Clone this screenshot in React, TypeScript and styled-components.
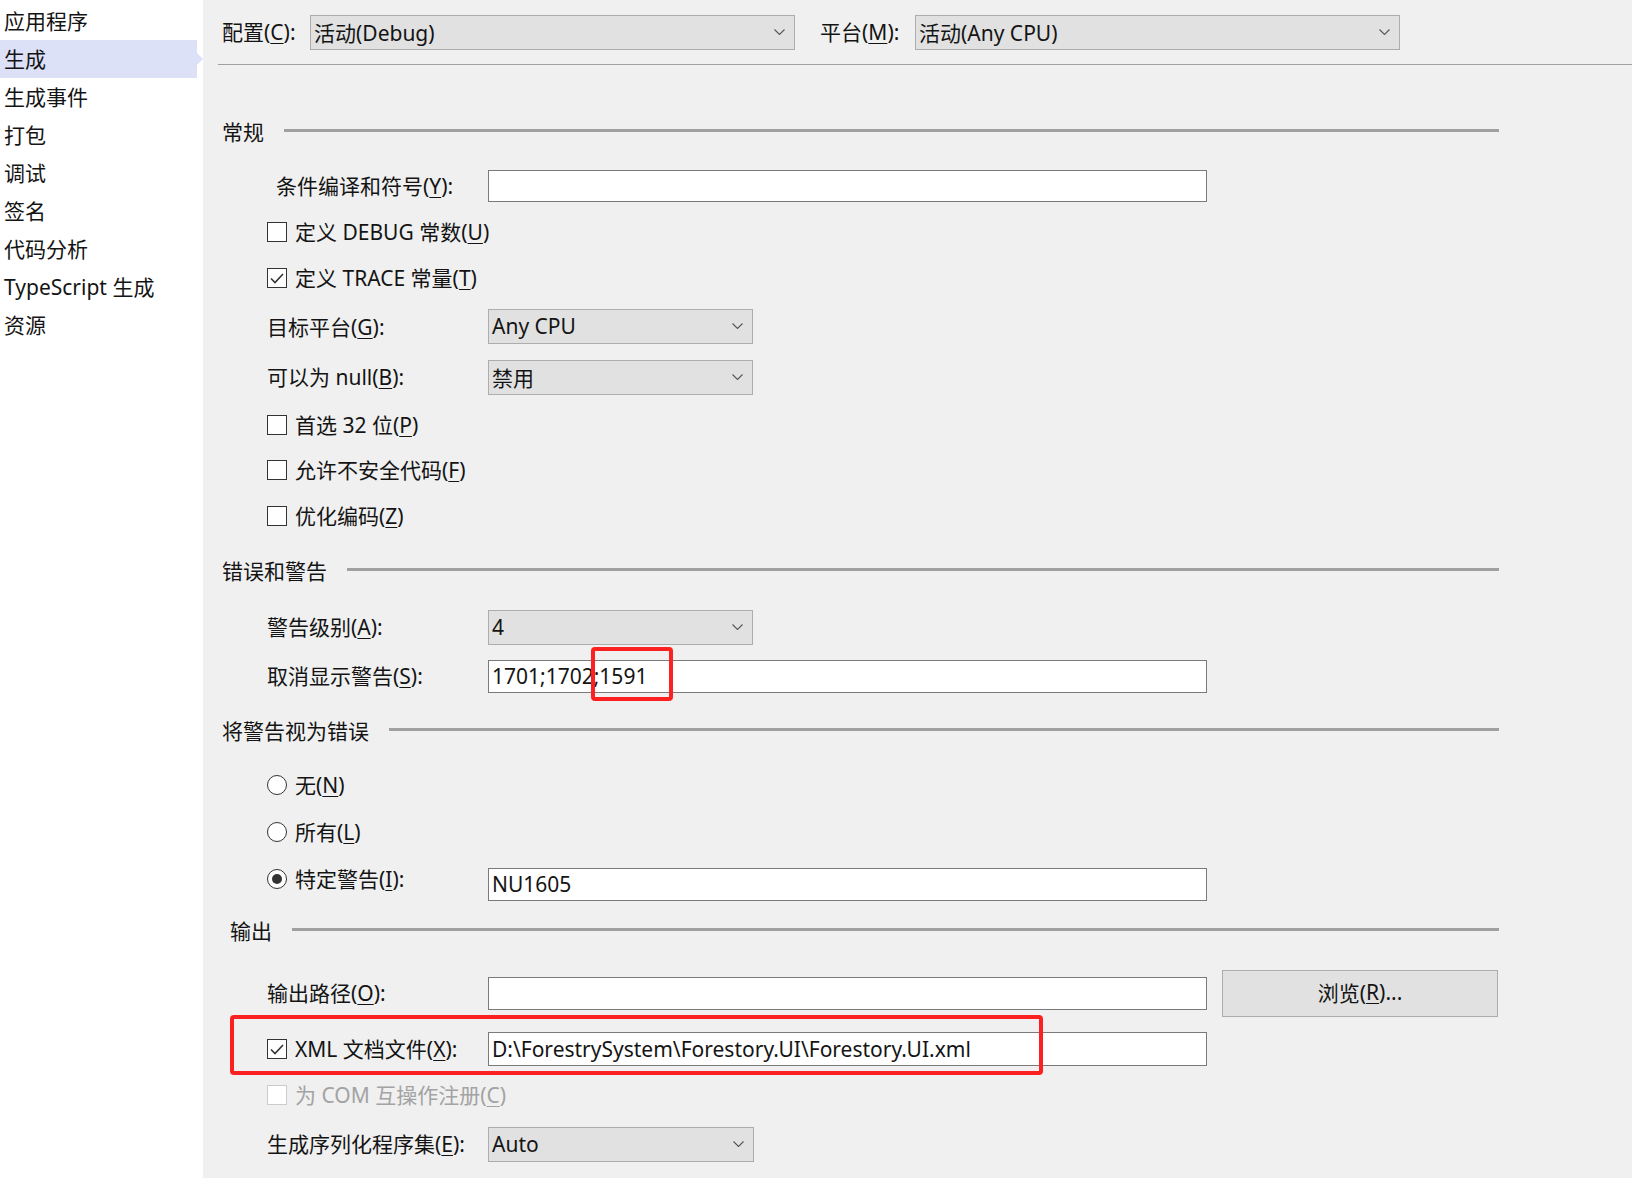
import React from "react";
import styled, { createGlobalStyle } from "styled-components";

const GlobalStyle = createGlobalStyle`
  html, body {
    margin: 0;
    padding: 0;
  }
  body {
    font-family: "Noto Sans", "Noto Sans CJK SC", sans-serif;
    font-size: 21px;
    color: #141414;
    background: #f0f0f0;
  }
  * {
    box-sizing: border-box;
  }
`;

const Page = styled.div`
  display: flex;
  width: 1632px;
  height: 1178px;
  overflow: hidden;
`;

const Sidebar = styled.nav`
  width: 203px;
  flex-shrink: 0;
  background: #ffffff;
  padding-top: 2px;
`;

const NavItem = styled.div<{ $active?: boolean }>`
  position: relative;
  width: 197px;
  height: 38px;
  padding: 0 0 3px 4px;
  display: flex;
  align-items: center;
  white-space: nowrap;
  background: ${(p) => (p.$active ? "#dce1f8" : "transparent")};

  ${(p) =>
    p.$active &&
    `
    &::after {
      content: "";
      position: absolute;
      right: -6px;
      top: 13px;
      border-left: 6px solid #dce1f8;
      border-top: 6px solid transparent;
      border-bottom: 6px solid transparent;
    }
  `}
`;

const Main = styled.main`
  flex: 1;
  background: #f0f0f0;
`;

const TopBar = styled.div`
  height: 65px;
  margin-left: 15px;
  padding-left: 4px;
  border-bottom: 1px solid #a0a0a0;
  display: flex;
  align-items: center;
`;

const TopLabel = styled.span<{ $w: number }>`
  width: ${(p) => p.$w}px;
  flex-shrink: 0;
  white-space: nowrap;
  padding-bottom: 2px;
`;

const Spacer = styled.div<{ $w: number }>`
  width: ${(p) => p.$w}px;
  flex-shrink: 0;
`;

const Select = styled.div<{ $w: number }>`
  width: ${(p) => p.$w}px;
  height: 35px;
  flex-shrink: 0;
  background: #e1e1e1;
  border: 1px solid #adadad;
  display: flex;
  align-items: center;
  justify-content: space-between;
  padding: 0 9px 1px 3px;
  white-space: nowrap;
`;

const Chevron = () => (
  <svg width="11" height="6" viewBox="0 0 11 6">
    <polyline points="0.5,0.5 5.5,5.5 10.5,0.5" fill="none" stroke="#555" strokeWidth="1.1" />
  </svg>
);

const Content = styled.div`
  width: 1296px;
  padding: 36px 0 0 19px;
`;

const SectionHeader = styled.div<{ $h: number; $indent?: number }>`
  height: ${(p) => p.$h}px;
  display: flex;
  align-items: center;
  padding-left: ${(p) => p.$indent ?? 0}px;
`;

const SectionTitle = styled.span`
  white-space: nowrap;
  padding-bottom: 2px;
`;

const Rule = styled.div`
  flex: 1;
  height: 3px;
  margin: -4px 0 0 20px;
  background: #a0a0a0;
`;

const Row = styled.div<{ $h: number }>`
  position: relative;
  height: ${(p) => p.$h}px;
  padding-left: 45px;
  display: flex;
  align-items: center;
`;

const Label = styled.span<{ $indent?: number; $w?: number }>`
  width: ${(p) => p.$w ?? 221}px;
  flex-shrink: 0;
  padding-left: ${(p) => p.$indent ?? 0}px;
  padding-bottom: 2px;
  white-space: nowrap;
`;

const TextBox = styled.div<{ $h?: number; $offset?: number }>`
  position: relative;
  width: 719px;
  height: ${(p) => p.$h ?? 33}px;
  margin-top: ${(p) => p.$offset ?? 0}px;
  flex-shrink: 0;
  background: #ffffff;
  border: 1px solid #7a7a7a;
  padding: 0 3px 1px;
  display: flex;
  align-items: center;
  white-space: nowrap;
`;

const Box = styled.span<{ $disabled?: boolean }>`
  width: 20px;
  height: 20px;
  flex-shrink: 0;
  margin-right: 8px;
  background: #ffffff;
  border: 1px solid ${(p) => (p.$disabled ? "#cccccc" : "#333333")};
  display: flex;
  align-items: center;
  justify-content: center;
`;

const Radio = styled.span<{ $checked?: boolean }>`
  width: 20px;
  height: 20px;
  flex-shrink: 0;
  margin-right: 8px;
  border-radius: 50%;
  background: #ffffff;
  border: 1px solid #333333;
  display: flex;
  align-items: center;
  justify-content: center;

  &::after {
    content: "";
    width: 10px;
    height: 10px;
    border-radius: 50%;
    background: ${(p) => (p.$checked ? "#333333" : "transparent")};
  }
`;

const OptionText = styled.span<{ $disabled?: boolean }>`
  white-space: nowrap;
  padding-bottom: 2px;
  color: ${(p) => (p.$disabled ? "#a3a3a3" : "inherit")};
`;

const BrowseButton = styled.div`
  width: 276px;
  height: 47px;
  margin-left: 15px;
  flex-shrink: 0;
  background: #e1e1e1;
  border: 1px solid #adadad;
  display: flex;
  align-items: center;
  justify-content: center;
  padding-bottom: 2px;
`;

const Mark = styled.span`
  position: absolute;
  border: 4px solid #fd2020;
  border-radius: 4px;
  pointer-events: none;
`;

const U = styled.span`
  text-decoration: underline;
  text-decoration-thickness: 1px;
  text-underline-offset: 3px;
`;

const CheckBox = ({ checked, disabled }: { checked?: boolean; disabled?: boolean }) => (
  <Box $disabled={disabled}>
    {checked && (
      <svg width="14" height="11" viewBox="0 0 14 11">
        <polyline points="1,5.5 5,9.5 13,1" fill="none" stroke="#333" strokeWidth="1.6" />
      </svg>
    )}
  </Box>
);

const navItems = ["应用程序", "生成", "生成事件", "打包", "调试", "签名", "代码分析", "TypeScript 生成", "资源"];

export default function App() {
  return (
    <>
      <GlobalStyle />
      <Page>
        <Sidebar>
          {navItems.map((n) => (
            <NavItem key={n} $active={n === "生成"}>
              {n}
            </NavItem>
          ))}
        </Sidebar>

        <Main>
          <TopBar>
            <TopLabel $w={88}>
              配置(<U>C</U>):
            </TopLabel>
            <Select $w={485}>
              <span>活动(Debug)</span>
              <Chevron />
            </Select>
            <Spacer $w={25} />
            <TopLabel $w={95}>
              平台(<U>M</U>):
            </TopLabel>
            <Select $w={485}>
              <span>活动(Any CPU)</span>
              <Chevron />
            </Select>
          </TopBar>

          <Content>
            <SectionHeader $h={62}>
              <SectionTitle>常规</SectionTitle>
              <Rule />
            </SectionHeader>

            <Row $h={46}>
              <Label $indent={9}>
                条件编译和符号(<U>Y</U>):
              </Label>
              <TextBox $h={32} />
            </Row>
            <Row $h={46}>
              <CheckBox />
              <OptionText>
                定义 DEBUG 常数(<U>U</U>)
              </OptionText>
            </Row>
            <Row $h={46}>
              <CheckBox checked />
              <OptionText>
                定义 TRACE 常量(<U>T</U>)
              </OptionText>
            </Row>
            <Row $h={51}>
              <Label>
                目标平台(<U>G</U>):
              </Label>
              <Select $w={265}>
                <span>Any CPU</span>
                <Chevron />
              </Select>
            </Row>
            <Row $h={50}>
              <Label>
                可以为 null(<U>B</U>):
              </Label>
              <Select $w={265}>
                <span>禁用</span>
                <Chevron />
              </Select>
            </Row>
            <Row $h={45}>
              <CheckBox />
              <OptionText>
                首选 32 位(<U>P</U>)
              </OptionText>
            </Row>
            <Row $h={46}>
              <CheckBox />
              <OptionText>
                允许不安全代码(<U>F</U>)
              </OptionText>
            </Row>
            <Row $h={46}>
              <CheckBox />
              <OptionText>
                优化编码(<U>Z</U>)
              </OptionText>
            </Row>

            <SectionHeader $h={64}>
              <SectionTitle>错误和警告</SectionTitle>
              <Rule />
            </SectionHeader>

            <Row $h={48}>
              <Label>
                警告级别(<U>A</U>):
              </Label>
              <Select $w={265}>
                <span>4</span>
                <Chevron />
              </Select>
            </Row>
            <Row $h={50}>
              <Label>
                取消显示警告(<U>S</U>):
              </Label>
              <TextBox>
                1701;1702;1591
                <Mark style={{ left: 102, top: -14, width: 82, height: 54 }} />
              </TextBox>
            </Row>

            <SectionHeader $h={60}>
              <SectionTitle>将警告视为错误</SectionTitle>
              <Rule />
            </SectionHeader>

            <Row $h={48}>
              <Radio />
              <OptionText>
                无(<U>N</U>)
              </OptionText>
            </Row>
            <Row $h={46}>
              <Radio />
              <OptionText>
                所有(<U>L</U>)
              </OptionText>
            </Row>
            <Row $h={48}>
              <Radio $checked />
              <Label $w={193}>
                特定警告(<U>I</U>):
              </Label>
              <TextBox $offset={11}>NU1605</TextBox>
            </Row>

            <SectionHeader $h={56} $indent={8}>
              <SectionTitle>输出</SectionTitle>
              <Rule />
            </SectionHeader>

            <Row $h={68}>
              <Label>
                输出路径(<U>O</U>):
              </Label>
              <TextBox />
              <BrowseButton>
                浏览(<U>R</U>)...
              </BrowseButton>
            </Row>
            <Row $h={44}>
              <CheckBox checked />
              <Label $w={193}>
                XML 文档文件(<U>X</U>):
              </Label>
              <TextBox $h={34}>{"D:\\ForestrySystem\\Forestory.UI\\Forestory.UI.xml"}</TextBox>
              <Mark style={{ left: 8, top: -12, width: 813, height: 60 }} />
            </Row>
            <Row $h={48}>
              <CheckBox disabled />
              <OptionText $disabled>
                为 COM 互操作注册(<U>C</U>)
              </OptionText>
            </Row>
            <Row $h={50}>
              <Label>
                生成序列化程序集(<U>E</U>):
              </Label>
              <Select $w={266}>
                <span>Auto</span>
                <Chevron />
              </Select>
            </Row>
          </Content>
        </Main>
      </Page>
    </>
  );
}
